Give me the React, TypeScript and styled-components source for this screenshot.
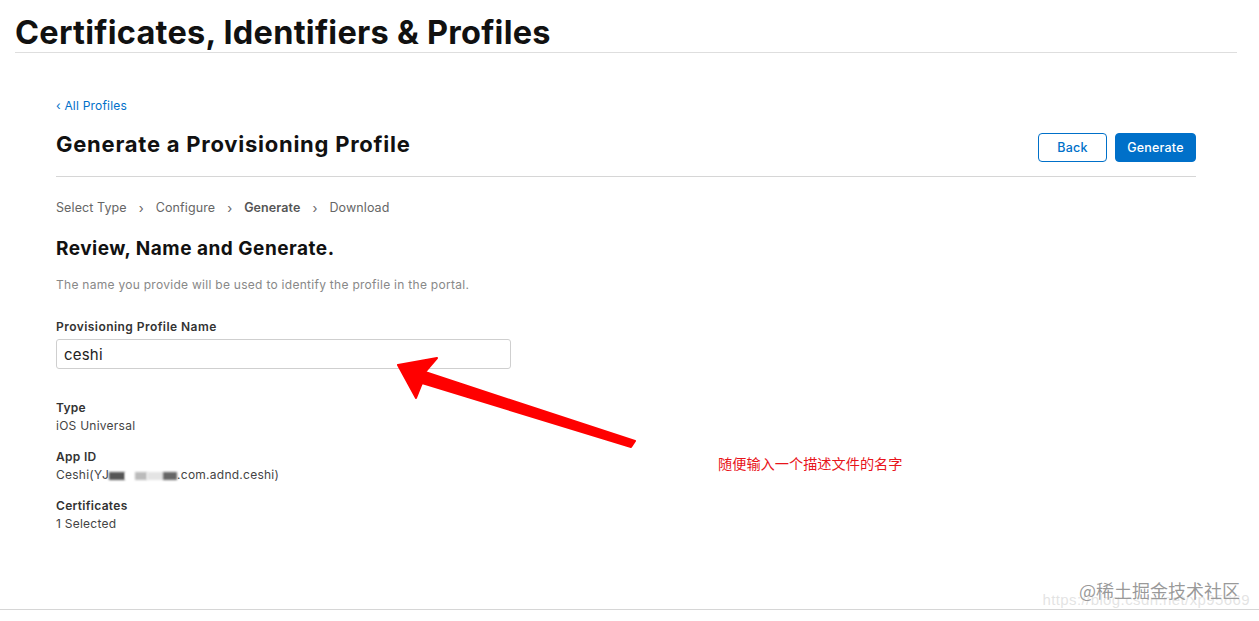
import React from "react";
import styled, { createGlobalStyle } from "styled-components";

const Global = createGlobalStyle`
  html, body { margin: 0; padding: 0; background: #fff; }
  body { font-family: Inter, "Noto Sans", "Liberation Sans", sans-serif; color: #111; }
  * { box-sizing: border-box; }
`;

const Page = styled.div`
  position: relative;
  width: 1259px;
  height: 621px;
  overflow: hidden;
  display: flex;
  flex-direction: column;
`;

const Header = styled.header`
  margin: 0 22px 0 15px;
  padding-top: 14px;
  height: 53px;
  border-bottom: 1px solid #dedede;
`;

const SiteTitle = styled.h1`
  margin: 0;
  font-size: 32.5px;
  line-height: 38px;
  font-weight: 700;
  letter-spacing: 0.25px;
  color: #111;
`;

const Main = styled.main`
  flex: 1;
  margin: 0 63px 0 56px;
  padding-top: 45px;
  display: flex;
  flex-direction: column;
`;

const BackLink = styled.a`
  font-size: 12px;
  line-height: 16px;
  letter-spacing: 0.2px;
  color: #0070c9;
  text-decoration: none;
`;

const TitleRow = styled.div`
  display: flex;
  align-items: center;
  justify-content: space-between;
  margin-top: 16px;
  padding-bottom: 11px;
  border-bottom: 1px solid #d6d6d6;
`;

const PageTitle = styled.h2`
  margin: 0;
  font-size: 22px;
  line-height: 28px;
  font-weight: 700;
  letter-spacing: 0.75px;
  color: #111;
  transform: translateY(-4px);
`;

const Buttons = styled.div`
  display: flex;
  gap: 8px;
  margin: 3px 0;
`;

const Button = styled.button<{ $primary?: boolean }>`
  height: 29px;
  width: ${(p) => (p.$primary ? "81px" : "69px")};
  padding: 0;
  border-radius: 4px;
  font-family: inherit;
  font-size: 12.5px;
  font-weight: 500;
  letter-spacing: 0.2px;
  border: 1px solid #0070c9;
  background: ${(p) => (p.$primary ? "#0070c9" : "#fff")};
  color: ${(p) => (p.$primary ? "#fff" : "#0070c9")};
`;

const Steps = styled.nav`
  display: flex;
  align-items: center;
  gap: 12px;
  margin-top: 23px;
  font-size: 12.5px;
  line-height: 16px;
  color: #666;
`;

const Step = styled.span<{ $active?: boolean }>`
  font-weight: ${(p) => (p.$active ? 600 : 400)};
  color: ${(p) => (p.$active ? "#555" : "#666")};
  letter-spacing: 0.1px;
`;

const Chevron = styled.span`
  font-size: 13px;
  color: #666;
`;

const SectionTitle = styled.h3`
  margin: 21px 0 0;
  font-size: 19px;
  line-height: 24px;
  font-weight: 700;
  letter-spacing: 0.5px;
  color: #111;
`;

const Description = styled.p`
  margin: 16px 0 0;
  font-size: 12px;
  line-height: 16px;
  letter-spacing: 0.28px;
  color: #888;
`;

const FieldLabel = styled.label`
  display: block;
  margin-top: 26px;
  font-size: 12px;
  line-height: 16px;
  font-weight: 600;
  letter-spacing: 0.45px;
  color: #333;
`;

const TextInput = styled.input`
  margin-top: 4px;
  width: 455px;
  height: 30px;
  border: 1px solid #cfcfcf;
  border-radius: 3px;
  padding: 0 7px;
  font-family: inherit;
  font-size: 15px;
  letter-spacing: 0.2px;
  color: #222;
  outline: none;
`;

const Details = styled.dl`
  margin: 31px 0 0;
  display: flex;
  flex-direction: column;
  gap: 15px;
`;

const DetailItem = styled.div`
  display: flex;
  flex-direction: column;
  gap: 2px;
`;

const DetailTerm = styled.dt`
  font-size: 12px;
  line-height: 16px;
  font-weight: 600;
  letter-spacing: 0.3px;
  color: #333;
`;

const DetailValue = styled.dd`
  margin: 0;
  font-size: 12px;
  line-height: 16px;
  letter-spacing: 0.25px;
  color: #444;
`;

const Redacted = styled.span<{ $shade: string }>`
  display: inline-block;
  height: 8px;
  vertical-align: middle;
  background: ${(p) => p.$shade};
  filter: blur(1px);
`;

const Footer = styled.footer`
  height: 12px;
  border-top: 1px solid #d6d6d6;
`;

const Arrow = styled.svg`
  position: absolute;
  left: 380px;
  top: 350px;
`;

const Note = styled.div`
  position: absolute;
  left: 718px;
  top: 455px;
  font-family: "Noto Sans CJK SC", sans-serif;
  font-size: 14.2px;
  line-height: 16px;
  color: #e8141a;
`;

const Watermark = styled.div`
  position: absolute;
  right: 19px;
  top: 579px;
  font-family: "Noto Sans CJK SC", sans-serif;
  font-size: 18px;
  line-height: 22px;
  color: rgba(120, 120, 120, 0.75);
  text-shadow: 0 0 1px #fff;
`;

const WatermarkUrl = styled.div`
  position: absolute;
  right: 9px;
  top: 591px;
  font-family: "Liberation Sans", sans-serif;
  font-size: 15px;
  letter-spacing: 0.4px;
  color: rgba(200, 200, 200, 0.5);
`;

const redactions: [number, string][] = [
  [16, "#555"],
  [10, "#fff"],
  [12, "#bbb"],
  [16, "#e4e4e4"],
  [14, "#666"],
];

export default function App() {
  return (
    <Page>
      <Global />
      <Header>
        <SiteTitle>Certificates, Identifiers &amp; Profiles</SiteTitle>
      </Header>
      <Main>
        <BackLink href="#">‹ All Profiles</BackLink>
        <TitleRow>
          <PageTitle>Generate a Provisioning Profile</PageTitle>
          <Buttons>
            <Button>Back</Button>
            <Button $primary>Generate</Button>
          </Buttons>
        </TitleRow>
        <Steps>
          <Step>Select Type</Step>
          <Chevron>›</Chevron>
          <Step>Configure</Step>
          <Chevron>›</Chevron>
          <Step $active>Generate</Step>
          <Chevron>›</Chevron>
          <Step>Download</Step>
        </Steps>
        <SectionTitle>Review, Name and Generate.</SectionTitle>
        <Description>
          The name you provide will be used to identify the profile in the portal.
        </Description>
        <FieldLabel>Provisioning Profile Name</FieldLabel>
        <TextInput defaultValue="ceshi" />
        <Details>
          <DetailItem>
            <DetailTerm>Type</DetailTerm>
            <DetailValue>iOS Universal</DetailValue>
          </DetailItem>
          <DetailItem>
            <DetailTerm>App ID</DetailTerm>
            <DetailValue>
              Ceshi(YJ
              {redactions.map(([w, c], i) => (
                <Redacted key={i} $shade={c} style={{ width: w }} />
              ))}
              .com.adnd.ceshi)
            </DetailValue>
          </DetailItem>
          <DetailItem>
            <DetailTerm>Certificates</DetailTerm>
            <DetailValue>1 Selected</DetailValue>
          </DetailItem>
        </Details>
      </Main>
      <Footer />
      <Arrow width="270" height="110" viewBox="0 0 270 110">
        <path
          d="M18 15 L57 8 L45 22 L255 91 L251 97 L42 33 L36 48 Z"
          fill="#ff0000"
          stroke="#ff0000"
          strokeWidth="2"
          strokeLinejoin="round"
        />
      </Arrow>
      <Note>随便输入一个描述文件的名字</Note>
      <WatermarkUrl>https://blog.csdn.net/xp95669</WatermarkUrl>
      <Watermark>@稀土掘金技术社区</Watermark>
    </Page>
  );
}
